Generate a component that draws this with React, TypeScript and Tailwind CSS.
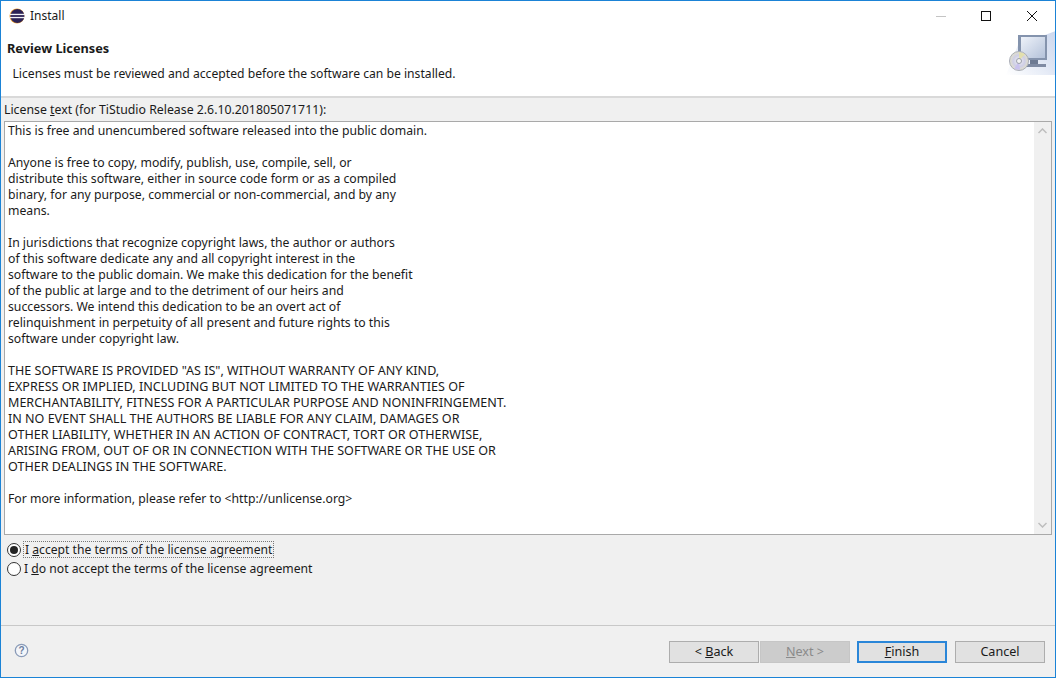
import React from "react";

const font = { fontFamily: '"Noto Sans", "Liberation Sans", sans-serif' };

const licenseTop = `This is free and unencumbered software released into the public domain.

Anyone is free to copy, modify, publish, use, compile, sell, or
distribute this software, either in source code form or as a compiled
binary, for any purpose, commercial or non-commercial, and by any
means.

In jurisdictions that recognize copyright laws, the author or authors
of this software dedicate any and all copyright interest in the
software to the public domain. We make this dedication for the benefit
of the public at large and to the detriment of our heirs and
successors. We intend this dedication to be an overt act of
relinquishment in perpetuity of all present and future rights to this
software under copyright law.`;

const licenseCaps = `THE SOFTWARE IS PROVIDED "AS IS", WITHOUT WARRANTY OF ANY KIND,
EXPRESS OR IMPLIED, INCLUDING BUT NOT LIMITED TO THE WARRANTIES OF
MERCHANTABILITY, FITNESS FOR A PARTICULAR PURPOSE AND NONINFRINGEMENT.
IN NO EVENT SHALL THE AUTHORS BE LIABLE FOR ANY CLAIM, DAMAGES OR
OTHER LIABILITY, WHETHER IN AN ACTION OF CONTRACT, TORT OR OTHERWISE,
ARISING FROM, OUT OF OR IN CONNECTION WITH THE SOFTWARE OR THE USE OR
OTHER DEALINGS IN THE SOFTWARE.`;

const licenseEnd = `For more information, please refer to <http://unlicense.org>`;

function EclipseIcon() {
  return (
    <svg width="16" height="16" viewBox="0 0 16 16">
      <circle cx="8" cy="8" r="7.5" fill="#f0a030" />
      <circle cx="8.4" cy="8" r="7" fill="#2c2255" />
      <rect x="1" y="5.8" width="15" height="1.3" fill="#f4f4f8" />
      <rect x="1" y="8.9" width="15" height="1.3" fill="#f4f4f8" />
    </svg>
  );
}

function WizardImage() {
  return (
    <svg width="50" height="44" viewBox="0 0 50 44">
      <defs>
        <linearGradient id="bg" x1="0" y1="1" x2="1" y2="0">
          <stop offset="0" stopColor="#ffffff" />
          <stop offset="0.55" stopColor="#dfe6f4" />
          <stop offset="1" stopColor="#cdd8ee" />
        </linearGradient>
        <linearGradient id="scr" x1="0" y1="0" x2="1" y2="1">
          <stop offset="0" stopColor="#eef2f9" />
          <stop offset="1" stopColor="#b4c2da" />
        </linearGradient>
        <radialGradient id="cd" cx="0.5" cy="0.5" r="0.55">
          <stop offset="0" stopColor="#f2f2f2" />
          <stop offset="0.55" stopColor="#cfcfe6" />
          <stop offset="1" stopColor="#e8e6c4" />
        </radialGradient>
      </defs>
      <path d="M0 44 L12 14 L50 0 V44 Z" fill="url(#bg)" />
      <rect x="12" y="4" width="29" height="25" fill="#8493ad" />
      <rect x="15" y="6" width="24" height="21" fill="url(#scr)" />
      <rect x="24" y="29" width="8" height="4" fill="#6d7a92" />
      <rect x="21" y="33" width="19" height="3" fill="#7f8ba3" />
      <circle cx="13" cy="30" r="9.5" fill="url(#cd)" stroke="#a9adb8" />
      <path d="M13 21 L19 23 L13 30 Z" fill="#e6e2a0" opacity="0.8" />
      <path d="M13 30 L8 38 L14 39 Z" fill="#c8c0ee" opacity="0.9" />
      <circle cx="13" cy="30" r="2.5" fill="#f4f4f4" stroke="#9a9eaa" />
    </svg>
  );
}

function Btn({ children, kind }: { children: React.ReactNode; kind?: "primary" | "disabled" }) {
  const cls =
    kind === "primary"
      ? "border-2 border-[#2a86d8] bg-[#e1e1e1] text-[#1a1a1a]"
      : kind === "disabled"
        ? "border border-[#c6c6c6] bg-[#cccccc] text-[#8a8a8a]"
        : "border border-[#adadad] bg-[#e1e1e1] text-[#1a1a1a]";
  return (
    <div className={`flex h-[22px] w-[90px] items-center justify-center text-[12.6px] leading-none ${cls}`}>{children}</div>
  );
}

function Radio({ checked }: { checked?: boolean }) {
  return (
    <span className="flex h-[14px] w-[14px] shrink-0 items-center justify-center rounded-full border border-[#333333] bg-white">
      {checked && <span className="h-[8px] w-[8px] rounded-full bg-[#222222]" />}
    </span>
  );
}

export default function App() {
  return (
    <div
      style={font}
      className="flex h-[678px] w-[1056px] flex-col overflow-hidden border border-[#1b83d6] bg-[#f0f0f0] text-[13px] text-[#1a1a1a]"
    >
      <div className="flex h-[29px] shrink-0 items-center bg-white pl-[8px]">
        <EclipseIcon />
        <span className="ml-[5px] text-[12px]">Install</span>
        <div className="ml-auto flex items-center">
          <svg width="46" height="16" viewBox="0 0 46 16">
            <line x1="19" x2="29" y1="8.5" y2="8.5" stroke="#c4c4c4" />
          </svg>
          <svg width="46" height="16" viewBox="0 0 46 16">
            <rect x="18.5" y="3.5" width="9" height="9" fill="none" stroke="#111" />
          </svg>
          <svg width="46" height="16" viewBox="0 0 46 16">
            <path d="M18 3 L28 13 M28 3 L18 13" stroke="#111" fill="none" />
          </svg>
        </div>
      </div>

      <div className="relative h-[68px] shrink-0 border-b-2 border-[#d9d9d9] bg-white pl-[6px] pt-[10px]">
        <div className="text-[12.75px] font-bold leading-[16px]">Review Licenses</div>
        <div className="ml-[5.5px] mt-[10px] text-[12.17px] leading-[16px]">
          Licenses must be reviewed and accepted before the software can be installed.
        </div>
        <div className="absolute right-[-1px] top-[1px]">
          <WizardImage />
        </div>
      </div>

      <div className="flex min-h-0 flex-1 flex-col px-[3px]">
        <div className="mt-[4px] text-[12.3px] leading-[16px]">
          License <u>t</u>ext (for TiStudio Release 2.6.10.201805071711):
        </div>
        <div className="mt-[3px] flex h-[414px] shrink-0 border border-[#a9a9a9] bg-white">
          <div className="min-w-0 flex-1 whitespace-pre-wrap pl-[3px] pt-[1px] text-[12.22px] leading-[16px] text-[#1a1a1a]">
            <div className="mb-[16px]">{licenseTop}</div>
            <div className="mb-[16px] text-[12.55px]">{licenseCaps}</div>
            <div>{licenseEnd}</div>
          </div>
          <div className="flex w-[17px] shrink-0 flex-col items-center justify-between bg-[#f0f0f0] py-[6px]">
            <svg width="9" height="6" viewBox="0 0 9 6"><path d="M0.5 5 L4.5 1 L8.5 5" fill="none" stroke="#bdbdbd" strokeWidth="1.5" /></svg>
            <svg width="9" height="6" viewBox="0 0 9 6"><path d="M0.5 1 L4.5 5 L8.5 1" fill="none" stroke="#bdbdbd" strokeWidth="1.5" /></svg>
          </div>
        </div>
        <div className="mt-[5px] flex h-[19px] items-center pl-[3px] text-[12.14px]">
          <Radio checked />
          <span className="ml-[2px] border border-dotted border-[#777777] px-[1px] leading-[15px]">
            I <u>a</u>ccept the terms of the license agreement
          </span>
        </div>
        <div className="flex h-[19px] items-center pl-[3px] text-[12.17px]">
          <Radio />
          <span className="ml-[2px] pl-[1px] leading-[15px]">
            I <u>d</u>o not accept the terms of the license agreement
          </span>
        </div>
      </div>

      <div className="flex h-[52px] shrink-0 items-start border-t border-[#c8c8c8] pr-[10px] pt-[15px]">
        <svg width="16" height="16" viewBox="0 0 16 16" className="ml-[13px] mt-[2px]">
          <circle cx="7.5" cy="7.5" r="6.2" fill="#f4f6fa" stroke="#8a9bb8" strokeWidth="1.3" />
          <text x="7.5" y="11" textAnchor="middle" fontSize="10" fontWeight="700" fill="#6d7f9f" fontFamily="Liberation Sans">?</text>
        </svg>
        <div className="ml-auto flex">
          <Btn><span>&lt; <u>B</u>ack</span></Btn>
          <div className="w-[1px]" />
          <Btn kind="disabled"><span><u>N</u>ext &gt;</span></Btn>
          <div className="w-[7px]" />
          <Btn kind="primary"><span><u>F</u>inish</span></Btn>
          <div className="w-[8px]" />
          <Btn>Cancel</Btn>
        </div>
      </div>
    </div>
  );
}
